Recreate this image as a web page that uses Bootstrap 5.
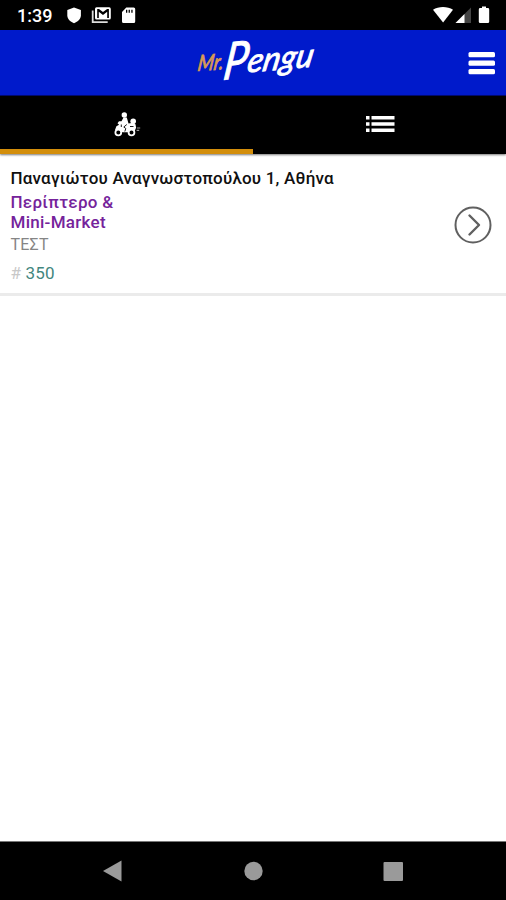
<!DOCTYPE html>
<html lang="el">
<head>
<meta charset="utf-8">
<meta name="viewport" content="width=device-width, initial-scale=1">
<title>Mr. Pengu</title>
<link href="https://cdn.jsdelivr.net/npm/bootstrap@5.3.0/dist/css/bootstrap.min.css" rel="stylesheet">
<style>
body{font-family:Roboto,"Noto Sans",sans-serif;background:#fff;overflow:hidden}
svg{display:block;flex:none}
.status-bar{height:30px;padding-left:17px;background:#000;color:#fff}
.clock{width:47px;font-size:18px;font-weight:500;line-height:30px;padding-top:1px}
.app-bar{height:66px;background:#001acb;border-bottom:1px solid #000b70;display:grid!important;grid-template-columns:1fr 130px 1fr}
.brand{overflow:visible;margin-left:2px}
.menu-btn{padding:0 11px 0 0;border:0;background:none;justify-self:end}
.tab-strip{height:58px;background:#000;box-shadow:0 1px 2px #0008;position:relative}
.tab-strip .nav-link{height:58px;padding:2px 0 0;border-bottom:5px solid transparent;border-radius:0}
.tab-strip .nav-link.active{border-bottom-color:#d38e0b}
.order-row{height:142px;padding:12px 14px 0 10.500px;border-bottom:3px solid #ebebeb}
.address{font-size:17px;font-weight:500;line-height:24px;color:#101010;white-space:nowrap;letter-spacing:.21px}
.shop{font-size:17px;font-weight:500;line-height:20px;color:#75239b;margin-top:2px;letter-spacing:.28px}
.client{font-size:16px;line-height:22px;color:#858585;margin-top:2px;letter-spacing:.2px}
.order-no{font-size:17px;line-height:22px;color:#43867e;margin-top:6px;letter-spacing:.2px}
.hash{color:#c8c8c8}
.go-icon{margin-top:39.500px}
.system-nav{height:59px;background:#000;border-top:1px solid #777}
</style>
<script src="https://cdn.jsdelivr.net/npm/bootstrap@5.3.0/dist/js/bootstrap.bundle.min.js"></script>
</head>
<body>
<div class="d-flex flex-column vh-100">
  <div class="status-bar d-flex align-items-center">
    <span class="clock">1:39</span>
    <svg width="76" height="30" viewBox="64 0 76 30" fill="#fff">
      <path d="M74 7.500 67.300 10v5.200c0 3.600 2.700 6.300 6.700 8 4-1.700 6.900-4.400 6.900-8V10z"/>
      <path d="M92.700 10.500V22.200h15" fill="none" stroke="#ddd" stroke-width="1.800"/>
      <path fill-rule="evenodd" d="M96.500 7.300h12.700q1.600 0 1.600 1.600v9q0 1.600-1.600 1.600H96.500q-1.500 0-1.500-1.600v-9q0-1.600 1.500-1.600zM97.200 9v8.900h1.600v-6.100l4.200 3.100 4.200-3.100v6.100h1.700V9h-1.800L103 12 99 9z"/>
      <path fill-rule="evenodd" d="M126.300 7.500h7.400q1.500 0 1.500 1.500v12.500q0 1.500-1.500 1.500h-10.200q-1.500 0-1.500-1.500V12zM126 9.700v3h1.300v-3zm2.600 0v3h1.300v-3zm2.700 0v3h1.300v-3z"/>
    </svg>
    <svg class="ms-auto" width="76" height="30" viewBox="430 0 76 30" fill="#fff">
      <path d="M433 9.700C438.500 6.100 447.500 6.100 453 9.700L443.100 22.500z"/>
      <path d="M471 7.500V23H455.500z" fill="#444"/><path d="M464.500 14V23h-9z"/>
      <path d="M482 8V6.500h4V8h1.800q1.400 0 1.400 1.400v12.300q0 1.400-1.400 1.400h-7.600q-1.400 0-1.400-1.400V9.400q0-1.400 1.400-1.400z"/>
    </svg>
  </div>

  <header class="app-bar align-items-center">
    <span></span>
    <svg class="brand" width="130" height="60" viewBox="190 32 130 60" font-family="Lato, 'Open Sans', sans-serif" font-style="italic">
      <g transform="translate(197 70) rotate(-4) skewX(-12)">
        <text x="0" y="0" font-size="22" fill="#d99a55" stroke="#d99a55" stroke-width=".8" textLength="26" lengthAdjust="spacingAndGlyphs">Mr.</text>
      </g>
      <g transform="translate(222 79) rotate(-6) skewX(-14)" fill="#fff" stroke="#fff" stroke-width=".9">
        <text x="0" y="0" font-size="51" textLength="24" lengthAdjust="spacingAndGlyphs">P</text>
      </g>
      <g transform="translate(246 71.500) rotate(-5) skewX(-16)" fill="#fff" stroke="#fff" stroke-width=".9">
        <text x="0" y="0" font-size="33" textLength="66" lengthAdjust="spacingAndGlyphs">engu</text>
      </g>
    </svg>
    <button class="menu-btn" type="button" aria-label="Menu">
      <svg width="27" height="24" viewBox="0 0 27 24" fill="#fff"><rect x=".5" y="1" width="26.500" height="5.200" rx="1.500"/><rect x=".5" y="9.500" width="26.500" height="5.200" rx="1.500"/><rect x=".5" y="18" width="26.500" height="5.200" rx="1.500"/></svg>
    </button>
  </header>

  <nav class="tab-strip nav nav-justified">
    <a class="nav-link active nav-item d-flex align-items-center justify-content-center" href="#" aria-label="Delivery">
      <svg width="30" height="30" viewBox="112 109 30 30" fill="#fff">
        <circle cx="124.300" cy="115" r="2.700"/><circle cx="133.200" cy="121.300" r="2.800"/>
        <path d="M123.500 117.500h3.300l1.700 6 3-.5 4 1.200.6 3.500-2 4.500h-11l-5.500-.5-2.500-2 1.300-3.500 2.700-1.500-1.600-1.500 1.500-2h2.500z"/>
        <circle cx="118.300" cy="132.500" r="2.900" fill="#000" stroke="#fff" stroke-width="1.800"/>
        <circle cx="131.500" cy="132.500" r="2.900" fill="#000" stroke="#fff" stroke-width="1.800"/>
        <path d="M121.300 124.500v2.500m5.500-2.500-3 2.500 2 1.500-1 3M130 126.500h3.500" fill="none" stroke="#000" stroke-width=".9"/>
        <path d="M136.900 128h3.300m-3.600 2.300h2.600" fill="none" stroke="#999" stroke-width="1.200"/>
      </svg>
    </a>
    <a class="nav-link nav-item d-flex align-items-center justify-content-center" href="#" aria-label="Orders">
      <svg width="30" height="20" viewBox="0 0 30 20" fill="#fff"><path d="M1 2h3.500v3.500H1zm5.500 0h23v3.500h-23zM1 8.200h3.500v3.500H1zm5.500 0h23v3.500h-23zM1 14.400h3.500v3.500H1zm5.500 0h23v3.500h-23z"/></svg>
    </a>
  </nav>

  <main class="flex-grow-1">
    <article class="order-row d-flex align-items-start">
      <div>
        <div class="address">Παναγιώτου Αναγνωστοπούλου 1, Αθήνα</div>
        <div class="shop">Περίπτερο &amp;<br>Mini-Market</div>
        <div class="client">ΤΕΣΤ</div>
        <div class="order-no"><span class="hash">#</span> 350</div>
      </div>
      <svg class="go-icon ms-auto" width="38" height="38" viewBox="0 0 38 38" fill="none" stroke="#606060" stroke-width="2"><circle cx="19" cy="19" r="17.500"/><path d="M15.500 9.500 25 19l-9.500 9.500" stroke-width="2.400" stroke-linecap="round" stroke-linejoin="round"/></svg>
    </article>
  </main>

  <footer class="system-nav">
    <svg width="506" height="58" viewBox="0 842 506 58" fill="#9a9a9a"><path d="M103 871 121.500 860.500v21z"/><circle cx="253.500" cy="871" r="9.200"/><rect x="383.500" y="862" width="19.500" height="19" rx="1"/></svg>
  </footer>
</div>
</body>
</html>
